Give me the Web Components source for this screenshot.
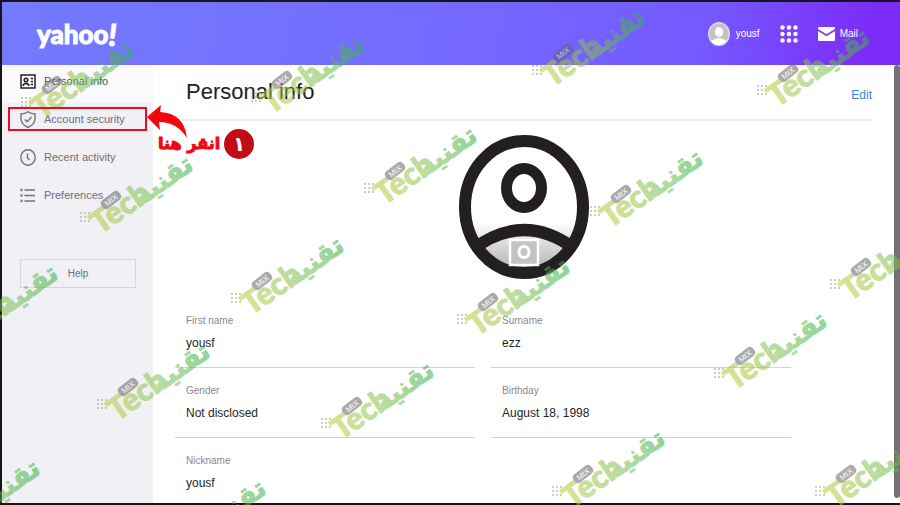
<!DOCTYPE html>
<html lang="en">
<head>
<meta charset="utf-8">
<meta name="viewport" content="width=device-width, initial-scale=1">
<title>Personal info</title>
<style>
  html, body { margin: 0; height: 100%; }
  body { font-family: "Liberation Sans", Arial, sans-serif; color: #26282a; background: #15151c; overflow: hidden; }
</style>
</head>
<body>
<account-page></account-page>
<script>
const define = (name, html) => customElements.define(name, class extends HTMLElement {
  connectedCallback() {
    if (this.shadowRoot) return;
    const root = this.attachShadow({ mode: "open" });
    root.innerHTML = typeof html === "function" ? html(this) : html;
  }
});

define("brand-logo", `
<style>
  :host { display: block; }
  a { display: flex; color: #fff; text-decoration: none; font: 900 26px/32px Lato, sans-serif; -webkit-text-stroke: 1px #fff; }
  i { font-size: 30px; }
</style>
<a href="#home" aria-label="yahoo!"><span>yahoo</span><i>!</i></a>`);

define("top-bar", `
<style>
  :host { display: flex; align-items: center; justify-content: space-between; box-sizing: border-box; height: 63px;
    padding: 0 42px 0 35px; color: #fff; background: linear-gradient(100deg, #737bff 0%, #746cff 45%, #7559ff 78%, #7c2cf8 96%); }
  nav { display: flex; align-items: center; gap: 20px; }
  a, button { display: flex; align-items: center; gap: 6px; color: inherit; background: none; border: 0; padding: 0;
    font: 10px/16px "Liberation Sans", Arial, sans-serif; text-decoration: none; }
  svg { display: block; }
  .mail { gap: 5px; }
</style>
<brand-logo></brand-logo>
<nav aria-label="Account">
  <button type="button">
    <svg width="22" height="24" viewBox="0 0 22 24"><ellipse cx="11" cy="12" rx="11" ry="12" fill="#dcdcdf"/><ellipse cx="11" cy="12" rx="9.6" ry="10.6" fill="#c3c3c5"/><ellipse cx="11" cy="10" rx="4" ry="5" fill="#fff"/><path d="M3.5 19 Q11 13 18.500 19 Q15.500 23 11 23 Q6.500 23 3.500 19Z" fill="#fff"/></svg>
    <span>yousf</span>
  </button>
  <button type="button" aria-label="Apps">
    <svg width="18" height="18" viewBox="0 0 18 18" fill="#fff"><circle cx="2.500" cy="2.500" r="2.200"/><circle cx="9" cy="2.500" r="2.200"/><circle cx="15.500" cy="2.500" r="2.200"/><circle cx="2.500" cy="9" r="2.200"/><circle cx="9" cy="9" r="2.200"/><circle cx="15.500" cy="9" r="2.200"/><circle cx="2.500" cy="15.500" r="2.200"/><circle cx="9" cy="15.500" r="2.200"/><circle cx="15.500" cy="15.500" r="2.200"/></svg>
  </button>
  <a class="mail" href="#mail">
    <svg width="17" height="14" viewBox="0 0 17 14" fill="#fff"><path d="M1 0H16Q17 0 17 1V2L8.500 7.300L0 2V1Q0 0 1 0Z"/><path d="M0 4L8.500 9.200L17 4V13Q17 14 16 14H1Q0 14 0 13Z"/></svg>
    <span>Mail</span>
  </a>
</nav>`);

const icons = {
  card: `<rect x="1" y="2" width="14" height="13"/><circle cx="6" cy="7" r="1.800"/><path d="M3 13Q3.300 10.500 6 10.500Q8.700 10.500 9 13M10.800 5.500H13M10.800 8.500H13M10.800 11.500H13"/>`,
  shield: `<path d="M8 .8Q11 3 15 3V8Q14.500 13.500 8 16.500Q1.500 13.500 1 8V3Q5 3 8 .8Z"/><path d="M4.800 8.500L7.200 10.800L11.500 6"/>`,
  clock: `<ellipse cx="8" cy="8.500" rx="7.200" ry="7.700"/><path d="M7.500 4.500V9L9.500 11"/>`,
  list: `<path d="M4.500 3H15M4.500 8.500H15M4.500 14H15"/><path d="M.5 3H2.500M.5 8.500H2.500M.5 14H2.500" stroke-width="2.500"/>`
};
define("nav-item", el => `
<style>
  :host { display: block; color: #6c717a; }
  :host([active]) { color: #55585d; background: #fafafd; }
  a { display: flex; align-items: center; gap: 8px; box-sizing: border-box; height: 38px; padding: 0 8px 6px 18px;
    color: inherit; text-decoration: none; font-size: 11px; line-height: 16px; }
  svg { flex: none; fill: none; stroke: #6f737b; stroke-width: 1.400; }
  :host([active]) svg { stroke: #222; stroke-width: 1.500; }
</style>
<a href="#${el.getAttribute("icon")}" ${el.hasAttribute("active") ? 'aria-current="page"' : ""}>
  <svg width="16" height="17" viewBox="0 0 16 17" aria-hidden="true">${icons[el.getAttribute("icon")]}</svg><span><slot></slot></span></a>`);

define("side-nav", `
<style>
  :host { display: block; background: #f0f0f5; }
  button { display: block; box-sizing: border-box; width: calc(100% - 35px); height: 29px; margin: 42px 17px 0 18px; padding: 0;
    background: transparent; border: 1px solid #d3d4dc; color: #6c717a; font: 10px/16px "Liberation Sans", Arial, sans-serif; }
</style>
<nav aria-label="Settings">
  <nav-item icon="card" active>Personal info</nav-item>
  <nav-item icon="shield">Account security</nav-item>
  <nav-item icon="clock">Recent activity</nav-item>
  <nav-item icon="list">Preferences</nav-item>
</nav>
<button type="button">Help</button>`);

define("profile-photo", `
<style>
  :host { display: block; }
  button { display: block; padding: 0; border: 0; background: none; }
  svg { display: block; }
</style>
<button type="button" aria-label="Change photo">
<svg width="130" height="144" viewBox="0 0 130 144">
  <defs>
    <linearGradient id="shade" x1="0" y1="0" x2="0" y2="1"><stop offset=".62" stop-color="#fff"/><stop offset="1" stop-color="#aaa"/></linearGradient>
    <clipPath id="round"><ellipse cx="65" cy="72" rx="60" ry="67"/></clipPath>
  </defs>
  <ellipse cx="65" cy="72" rx="59" ry="66" fill="url(#shade)"/>
  <path d="M14 114Q65 76 116 114" fill="none" stroke="#231f20" stroke-width="12" clip-path="url(#round)"/>
  <path d="M10 106L26 115L38 127L20 120ZM120 106L104 115L92 127L110 120Z" fill="#231f20"/>
  <ellipse cx="65" cy="72" rx="59" ry="66" fill="none" stroke="#231f20" stroke-width="12"/>
  <ellipse cx="65" cy="53" rx="17.500" ry="19.500" fill="#fff" stroke="#231f20" stroke-width="11"/>
  <rect x="51" y="105" width="28" height="25" fill="#c4c4c4" stroke="#fff" stroke-width="2.500"/>
  <ellipse cx="65" cy="117" rx="5" ry="5.500" fill="#c4c4c4" stroke="#fff" stroke-width="3"/>
</svg>
</button>`);

define("profile-field", `
<style>
  :host { display: block; box-sizing: border-box; height: 70px; padding: 15px 11px 0; border-bottom: 1px solid #d2d2d4; }
  dl, dd { margin: 0; }
  dt { color: #87898e; font-size: 10px; line-height: 16px; }
  dd { margin-top: 6px; color: #232528; font-size: 12px; line-height: 16px; }
</style>
<dl><dt><slot name="label"></slot></dt><dd><slot></slot></dd></dl>`);

define("info-panel", `
<style>
  :host { display: block; min-width: 0; padding: 0 22px; overflow: hidden; }
  header { display: flex; align-items: center; justify-content: space-between; height: 54px; padding-left: 11px; border-bottom: 2px solid #ececee; }
  h1 { margin: 0; font-weight: 400; font-size: 22px; line-height: 28px; color: #222; }
  a { color: #3b82e6; text-decoration: none; font-size: 12px; line-height: 16px; padding-top: 6px; }
  profile-photo { width: 130px; margin: 14px auto 19px; }
  .fields { display: grid; grid-template-columns: 1fr 1fr; column-gap: 16px; padding-right: 81px; }
</style>
<header><h1>Personal info</h1><a href="#edit">Edit</a></header>
<profile-photo></profile-photo>
<div class="fields">
  <profile-field><span slot="label">First name</span>yousf</profile-field>
  <profile-field><span slot="label">Surname</span>ezz</profile-field>
  <profile-field><span slot="label">Gender</span>Not disclosed</profile-field>
  <profile-field><span slot="label">Birthday</span>August 18, 1998</profile-field>
  <profile-field><span slot="label">Nickname</span>yousf</profile-field>
</div>`);

define("step-callout", `
<style>
  :host { display: block; }
  .frame { position: absolute; left: 8px; top: 107px; width: 139px; height: 24px; box-sizing: border-box; border: 2px solid #ea0c18; }
  svg { position: absolute; left: 147px; top: 105px; }
  .note { position: absolute; left: 158px; top: 129px; display: flex; align-items: center; gap: 4px; color: #f00812;
    font: 700 16px/30px "DejaVu Sans", sans-serif; white-space: nowrap; -webkit-text-stroke: 1px #f00812; }
  b { width: 30px; height: 30px; border-radius: 50%; background: #c30c16; color: #fff; text-align: center; font-size: 20px; -webkit-text-stroke: 0; }
</style>
<div class="frame"></div>
<svg width="42" height="34" viewBox="0 0 42 34" fill="#f2060c"><path d="M0 12L14 0L13 7Q37 8 40 33Q30 17 12 17L13 25Z"/></svg>
<div class="note" dir="rtl" lang="ar"><b>١</b><span>انقر هنا</span></div>`);

define("tech-mark", `
<style>
  :host { position: absolute; display: block; opacity: .55; }
  svg { display: block; overflow: visible; }
</style>
<svg width="130" height="110" viewBox="0 0 130 110">
  <defs><linearGradient id="leaf" gradientUnits="userSpaceOnUse" x1="0" y1="0" x2="115" y2="0"><stop offset="0" stop-color="#bccb3c"/><stop offset=".5" stop-color="#80c150"/><stop offset="1" stop-color="#35b14c"/></linearGradient></defs>
  <path d="M0 72H10M0 76H10M0 80H10" stroke="#8fb58f" stroke-width="2" stroke-dasharray="2 2"/>
  <g transform="translate(20 94) rotate(-35)" fill="url(#leaf)" stroke="url(#leaf)" stroke-linejoin="round" stroke-width="1">
    <text x="0" y="0" font-family="Lato, sans-serif" font-weight="900" font-size="31">Tech</text>
    <text x="116" y="0" text-anchor="end" font-family="DejaVu Sans, sans-serif" font-weight="700" font-size="26">تقنية</text>
  </g>
  <g transform="translate(31 59) rotate(-38)"><rect x="-11" y="-5" width="22" height="10" rx="4" fill="#666"/><text y="3" text-anchor="middle" font-family="Liberation Sans, sans-serif" font-size="8" fill="#fff">MIX</text></g>
</svg>`);

const marks = [[21,96],[251,91],[532,64],[757,84],[364,182],[590,205],[80,211],[231,292],[457,313],[714,367],[830,278],[97,398],[321,417],[552,485],[815,485],[-55,320],[-73,515],[153,535]];
define("mark-layer", `
<style>:host { position: absolute; inset: 0; overflow: hidden; pointer-events: none; }</style>
${marks.map(([x, y]) => `<tech-mark style="left:${x}px;top:${y - 70}px"></tech-mark>`).join("")}`);

define("account-page", `
<style>
  :host { position: relative; display: grid; grid-template-rows: auto minmax(0, 1fr); box-sizing: border-box; height: 100vh; padding: 2px 0 2px 2px; overflow: hidden; }
  .body { display: grid; grid-template-columns: 151px minmax(0, 1fr) 6px; min-height: 0; background: #fff; }
  .thumb { background: #727272; border-radius: 3px; margin-bottom: 5px; }
</style>
<top-bar></top-bar>
<div class="body"><side-nav></side-nav><info-panel></info-panel><div class="thumb"></div></div>
<mark-layer></mark-layer>
<step-callout></step-callout>`);
</script>
</body>
</html>
